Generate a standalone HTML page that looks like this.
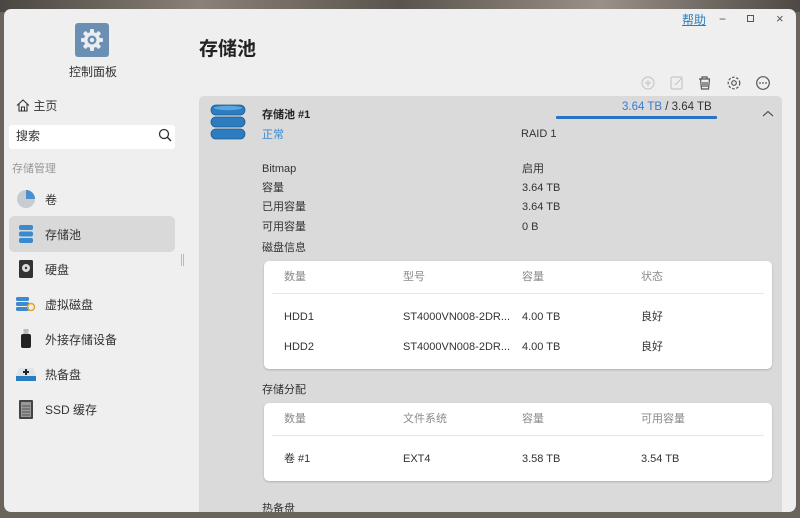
<!DOCTYPE html>
<html><head><meta charset="utf-8"><style>
*{margin:0;padding:0;box-sizing:border-box}
body{width:800px;height:518px;overflow:hidden;background:#6b645c;font-family:"Liberation Sans","Noto Sans CJK SC",sans-serif;color:#333;position:relative}
.bgtop{position:absolute;left:0;top:0;width:800px;height:12px;background:linear-gradient(90deg,#4a4641,#8a8178,#5a544e,#9a9088,#4e4944)}
.win{position:absolute;left:4px;top:9px;width:792px;height:503px;background:#efefef;border-radius:7px;overflow:hidden}
.abs{position:absolute}
.side .item{position:absolute;left:5px;width:166px;height:36px;font-size:12px;display:flex;align-items:center;padding-left:6px}
.side .item .ic{width:22px;height:22px;margin-right:8px;display:flex;align-items:center;justify-content:center}
.card{position:absolute;left:195px;top:87px;width:583px;height:430px;background:#dadada;border-radius:5px}
.t{position:absolute;font-size:11px;line-height:14px;color:#333;white-space:nowrap}
.tbl{position:absolute;left:65px;width:508px;background:#fff;border-radius:5px;box-shadow:0 1px 2px rgba(0,0,0,.2)}
.h{color:#8a8a8a}
</style></head><body>
<div class="bgtop"></div>
<div class="win">
 <div class="abs" style="left:71px;top:14px;width:34px;height:34px;background:#6b8fb3;border-radius:3px;display:flex;align-items:center;justify-content:center">
  <svg width="26" height="26" viewBox="0 0 26 26"><g fill="#e9edf2"><circle cx="13" cy="13" r="8"/><rect x="11" y="2" width="4" height="22" rx="1"/><rect x="2" y="11" width="22" height="4" rx="1"/><rect x="11" y="2" width="4" height="22" rx="1" transform="rotate(45 13 13)"/><rect x="11" y="2" width="4" height="22" rx="1" transform="rotate(-45 13 13)"/></g><circle cx="13" cy="13" r="4.5" fill="#6b8fb3"/><circle cx="13" cy="13" r="2.2" fill="#e9edf2"/></svg>
 </div>
 <div class="t" style="left:65px;top:56px;font-size:12px">控制面板</div>
 <div class="t" style="left:12px;top:90px;font-size:12px"><svg width="14" height="13" viewBox="0 0 14 13" style="vertical-align:-2px"><path d="M1 6.5L7 1l6 5.5M3 5v7h8V5M5.5 12V8h3v4" fill="none" stroke="#333" stroke-width="1.1"/></svg> 主页</div>
 <div class="abs" style="left:5px;top:116px;width:166px;height:24px;background:#fff;border-radius:3px"></div>
 <div class="t" style="left:12px;top:120px;font-size:12px">搜索</div>
 <svg class="abs" style="left:154px;top:119px" width="14" height="14" viewBox="0 0 14 14"><circle cx="6" cy="6" r="4.5" fill="none" stroke="#333" stroke-width="1.3"/><path d="M9.3 9.3L13 13" stroke="#333" stroke-width="1.4"/></svg>
 <div class="t" style="left:8px;top:153px;font-size:11px;color:#999">存储管理</div>
 <div class="side">
  <div class="item" style="top:172px"><div class="ic"><svg width="20" height="20"><circle cx="10" cy="10" r="9" fill="#c8ccd0"/><path d="M10 10V1A9 9 0 0 1 19 10Z" fill="#4a90d0"/></svg></div>卷</div>
  <div class="item" style="top:207px;background:#d9d9d9;border-radius:5px"><div class="ic"><svg width="16" height="20"><rect x="1" y="1" width="14" height="5" rx="2" fill="#3a8ad0"/><rect x="1" y="7.5" width="14" height="5" rx="2" fill="#3a8ad0"/><rect x="1" y="14" width="14" height="5" rx="2" fill="#3a8ad0"/></svg></div>存储池</div>
  <div class="item" style="top:242px"><div class="ic"><svg width="14" height="18"><rect x="0" y="0" width="14" height="18" rx="1.5" fill="#333"/><circle cx="7" cy="8" r="4" fill="#ddd"/><circle cx="7" cy="8" r="1.2" fill="#333"/></svg></div>硬盘</div>
  <div class="item" style="top:277px"><div class="ic"><svg width="20" height="16"><rect x="0" y="1" width="13" height="4" rx="1.5" fill="#3a8ad0"/><rect x="0" y="6" width="13" height="4" rx="1.5" fill="#3a8ad0"/><rect x="0" y="11" width="13" height="4" rx="1.5" fill="#3a8ad0"/><circle cx="15" cy="11" r="3.5" fill="none" stroke="#e8a020" stroke-width="1.4"/></svg></div>虚拟磁盘</div>
  <div class="item" style="top:312px"><div class="ic"><svg width="10" height="20"><rect x="2.5" y="0" width="5" height="5" fill="#bbb"/><rect x="0" y="5" width="10" height="14" rx="2" fill="#222"/></svg></div>外接存储设备</div>
  <div class="item" style="top:347px"><div class="ic"><svg width="20" height="16"><path d="M3 2h14l3 8v5H0v-5z" fill="#dfe4e8"/><rect x="0" y="10" width="20" height="5" fill="#2a7cc0"/><path d="M10 3v6M7 6h6" stroke="#222" stroke-width="2"/></svg></div>热备盘</div>
  <div class="item" style="top:382px"><div class="ic"><svg width="14" height="19"><rect x="0" y="0" width="14" height="19" rx="1" fill="#444"/><rect x="2" y="2" width="10" height="15" fill="#999"/><path d="M3 6h8M3 9h8M3 12h8M3 15h8" stroke="#555"/></svg></div>SSD 缓存</div>
 </div>
 <div class="abs" style="left:177px;top:245px;width:3px;height:12px;border-left:1px solid #bbb;border-right:1px solid #bbb"></div>

 <div class="t" style="left:195px;top:30px;font-size:19px;line-height:22px;font-weight:bold;color:#222">存储池</div>
 <div class="t" style="left:678px;top:4px;font-size:12px;color:#2a7fc0;text-decoration:underline">帮助</div>
 <div class="t" style="left:715px;top:3px;font-size:12px;color:#555">−</div>
 <div class="abs" style="left:743px;top:6px;width:7px;height:7px;border:1px solid #555"></div>
 <div class="t" style="left:772px;top:3px;font-size:13px;color:#555">×</div>
 <svg class="abs" style="left:636px;top:65px" width="140" height="18" viewBox="0 0 140 18">
  <g fill="none" stroke-width="1.2">
   <circle cx="8" cy="9" r="6" stroke="#c8c8c8"/><path d="M8 6v6M5 9h6" stroke="#c8c8c8"/>
   <rect x="31" y="3" width="11" height="12" rx="1.5" stroke="#c8c8c8"/><path d="M35 11l7-7" stroke="#c8c8c8"/>
   <path d="M59 5h11M62 5V3h5v2M60.5 5l1 10h7l1-10M63 8v5M65 8v5M67 8v5" stroke="#555"/>
   <circle cx="94" cy="9" r="2.3" stroke="#555"/><circle cx="94" cy="9" r="5.8" stroke="#555" stroke-dasharray="2.6 1.6"/>
   <circle cx="123" cy="9" r="6.3" stroke="#555"/>
  </g>
  <g fill="#555"><circle cx="120" cy="9" r="0.9"/><circle cx="123" cy="9" r="0.9"/><circle cx="126" cy="9" r="0.9"/></g>
 </svg>

 <div class="card">
  <svg class="abs" style="left:11px;top:8px" width="36" height="36" viewBox="0 0 36 36"><g fill="#2d7cc0" stroke="#1a5a90" stroke-width=".8"><rect x="1" y="1" width="34" height="10" rx="5"/><rect x="1" y="13" width="34" height="10" rx="5"/><rect x="1" y="25" width="34" height="10" rx="5"/></g><ellipse cx="18" cy="4" rx="14" ry="2.2" fill="#5aa6e2"/></svg>
  <div class="t" style="left:63px;top:12px;font-weight:bold;color:#222">存储池 #1</div>
  <div class="t" style="left:63px;top:32px;color:#3a8ad0">正常</div>
  <div class="t" style="left:322px;top:31px">RAID 1</div>
  <div class="t" style="left:423px;top:4px;font-size:11.5px"><span style="color:#3a7ad0">3.64 TB</span> / 3.64 TB</div>
  <div class="abs" style="left:357px;top:20px;width:161px;height:3px;background:#2a72c8;border-radius:1px"></div>
  <svg class="abs" style="left:563px;top:14px" width="12" height="8"><path d="M1 6l5-4.5 5 4.5" fill="none" stroke="#555" stroke-width="1.2"/></svg>
  <div class="t" style="left:63px;top:66px">Bitmap</div><div class="t" style="left:323px;top:66px">启用</div>
  <div class="t" style="left:63px;top:85px">容量</div><div class="t" style="left:323px;top:85px">3.64 TB</div>
  <div class="t" style="left:63px;top:104px">已用容量</div><div class="t" style="left:323px;top:104px">3.64 TB</div>
  <div class="t" style="left:63px;top:124px">可用容量</div><div class="t" style="left:323px;top:124px">0 B</div>
  <div class="t" style="left:63px;top:145px">磁盘信息</div>
  <div class="tbl" style="top:165px;height:108px">
   <div class="t h" style="left:20px;top:9px">数量</div><div class="t h" style="left:139px;top:9px">型号</div><div class="t h" style="left:258px;top:9px">容量</div><div class="t h" style="left:377px;top:9px">状态</div>
   <div class="abs" style="left:8px;top:32px;width:492px;height:1px;background:#e6e6e6"></div>
   <div class="t" style="left:20px;top:49px">HDD1</div><div class="t" style="left:139px;top:49px">ST4000VN008-2DR...</div><div class="t" style="left:258px;top:49px">4.00 TB</div><div class="t" style="left:377px;top:49px">良好</div>
   <div class="t" style="left:20px;top:79px">HDD2</div><div class="t" style="left:139px;top:79px">ST4000VN008-2DR...</div><div class="t" style="left:258px;top:79px">4.00 TB</div><div class="t" style="left:377px;top:79px">良好</div>
  </div>
  <div class="t" style="left:63px;top:287px">存储分配</div>
  <div class="tbl" style="top:307px;height:78px">
   <div class="t h" style="left:20px;top:9px">数量</div><div class="t h" style="left:139px;top:9px">文件系统</div><div class="t h" style="left:258px;top:9px">容量</div><div class="t h" style="left:377px;top:9px">可用容量</div>
   <div class="abs" style="left:8px;top:32px;width:492px;height:1px;background:#e6e6e6"></div>
   <div class="t" style="left:20px;top:49px">卷 #1</div><div class="t" style="left:139px;top:49px">EXT4</div><div class="t" style="left:258px;top:49px">3.58 TB</div><div class="t" style="left:377px;top:49px">3.54 TB</div>
  </div>
  <div class="t" style="left:63px;top:406px">热备盘</div>
 </div>
</div>
</body></html>
